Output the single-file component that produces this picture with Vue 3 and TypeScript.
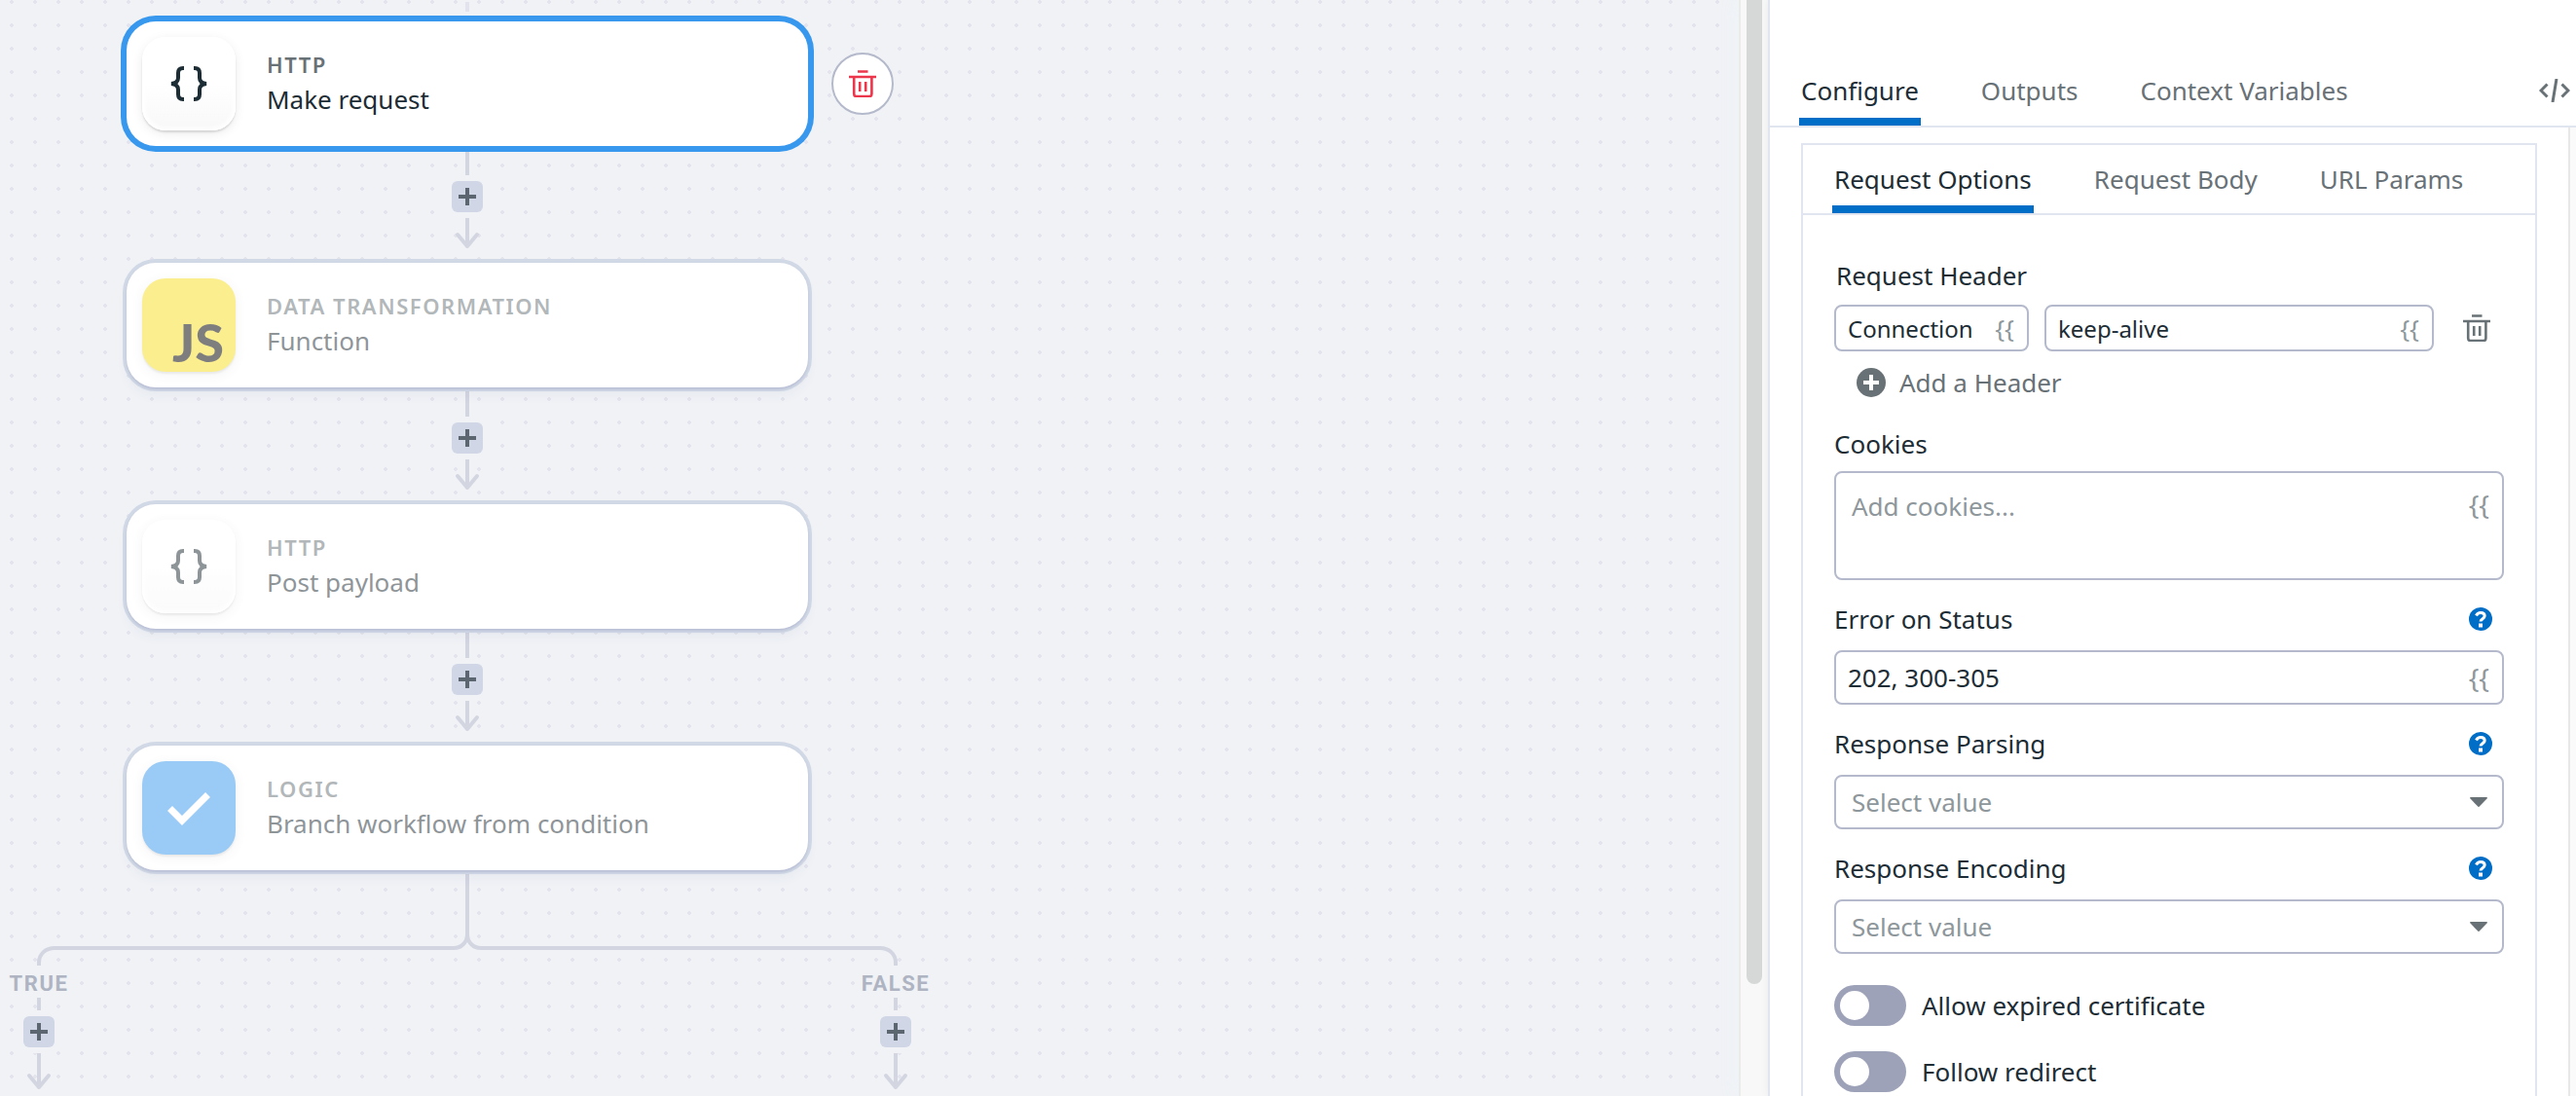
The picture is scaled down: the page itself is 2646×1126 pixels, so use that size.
<script setup lang="ts">
import { ref } from 'vue'

type Glyph = 'braces' | 'js' | 'check'

interface Step {
  id: number
  kind: string
  name: string
  glyph: Glyph
  selected: boolean
}

interface SelectField {
  id: string
  label: string
  options: string[]
}

const steps: Step[] = [
  { id: 1, kind: 'HTTP', name: 'Make request', glyph: 'braces', selected: true },
  { id: 2, kind: 'DATA TRANSFORMATION', name: 'Function', glyph: 'js', selected: false },
  { id: 3, kind: 'HTTP', name: 'Post payload', glyph: 'braces', selected: false },
  { id: 4, kind: 'LOGIC', name: 'Branch workflow from condition', glyph: 'check', selected: false },
]

const branches = ['TRUE', 'FALSE']
const mainTabs = ['Configure', 'Outputs', 'Context Variables']
const requestTabs = ['Request Options', 'Request Body', 'URL Params']

const selectFields: SelectField[] = [
  { id: 'parsing', label: 'Response Parsing', options: ['JSON', 'Text'] },
  { id: 'encoding', label: 'Response Encoding', options: ['UTF-8', 'Base64'] },
]

const toggles = ['Allow expired certificate', 'Follow redirect']

const activeMain = ref(mainTabs[0])
const activeRequest = ref(requestTabs[0])
const headerName = ref('Connection')
const headerValue = ref('keep-alive')
const cookies = ref('')
const errorStatus = ref('202, 300-305')
const selected = ref<Record<string, string>>({ parsing: '', encoding: '' })
</script>

<template>
  <div class="app">
    <main class="canvas">
      <div class="flow">
        <svg class="stub" viewBox="0 0 24 22" aria-hidden="true"><path d="M12 2v10" /></svg>
        <template v-for="(step, i) in steps" :key="step.id">
          <article class="card" :class="{ selected: step.selected }">
            <div class="tile" :class="step.glyph">
              <svg v-if="step.glyph === 'braces'" viewBox="0 0 40 40" aria-hidden="true">
                <path d="M15 4h-1c-3.500 0-5 1.800-5 5v5c0 3.500-2 5.500-7 6 5 .5 7 2.500 7 6v5c0 3.200 1.500 5 5 5h1M25 4h1c3.500 0 5 1.800 5 5v5c0 3.500 2 5.500 7 6-5 .5-7 2.500-7 6v5c0 3.200-1.500 5-5 5h-1" />
              </svg>
              <span v-else-if="step.glyph === 'js'" class="js-mark">JS</span>
              <svg v-else viewBox="0 0 44 36" aria-hidden="true">
                <path d="M2.500 18.500 15 31 41.500 4.500" />
              </svg>
            </div>
            <div class="caption">
              <span class="kind">{{ step.kind }}</span>
              <span class="name">{{ step.name }}</span>
            </div>
            <button v-if="step.selected" class="delete" type="button" aria-label="Delete step">
              <svg class="trash" viewBox="0 0 28 28" aria-hidden="true">
                <path d="M9 1.500h10.500M0 7h28" />
                <path d="M5.200 8v16.500a2.500 2.500 0 0 0 2.500 2.500h13.200a2.500 2.500 0 0 0 2.500-2.500V8M11.200 12v10M17.200 12v10" />
              </svg>
            </button>
          </article>
          <div v-if="i < steps.length - 1" class="connector">
            <svg class="lead" viewBox="0 0 24 30" aria-hidden="true"><path d="M12 0v30" /></svg>
            <button class="add" type="button" aria-label="Add step">
              <svg viewBox="0 0 18 18" aria-hidden="true"><path d="M9 0v18M0 9h18" /></svg>
            </button>
            <svg class="arrow" viewBox="0 0 24 34" aria-hidden="true">
              <path d="M12 0v29" /><path class="head" d="M2 17l10 12 10-12" />
            </svg>
          </div>
        </template>

        <svg class="fork" viewBox="0 0 960 98" aria-hidden="true">
          <path d="M480 0v66c0 8-6 14-14 14H56c-9 0-16 6-16 15v3" />
          <path d="M480 66c0 8 6 14 14 14h410c9 0 16 6 16 15v3" />
        </svg>
        <div class="arms">
          <div v-for="branch in branches" :key="branch" class="arm">
            <span class="branch">{{ branch }}</span>
            <svg class="tick" viewBox="0 0 24 13" aria-hidden="true"><path d="M12 0v13" /></svg>
            <button class="add" type="button" :aria-label="'Add step to ' + branch">
              <svg viewBox="0 0 18 18" aria-hidden="true"><path d="M9 0v18M0 9h18" /></svg>
            </button>
            <svg class="arrow" viewBox="0 0 24 34" aria-hidden="true">
              <path d="M12 0v34" /><path class="head" d="M2 23l10 12 10-12" />
            </svg>
          </div>
        </div>
      </div>
    </main>

    <div class="scrollbar" aria-hidden="true"><div class="thumb"></div></div>

    <aside class="panel">
      <nav class="tabs main-tabs">
        <button
          v-for="tab in mainTabs"
          :key="tab"
          type="button"
          class="tab"
          :class="{ active: tab === activeMain }"
          @click="activeMain = tab"
        >{{ tab }}</button>
        <button class="code" type="button" aria-label="View as code">
          <svg viewBox="0 0 32 24" aria-hidden="true">
            <path d="M8.500 5.500 2 12l6.500 6.500M23.500 5.500 30 12l-6.500 6.500M18 0l-4 24" />
          </svg>
        </button>
      </nav>

      <div class="panel-body">
        <section class="box">
          <nav class="tabs box-tabs">
            <button
              v-for="tab in requestTabs"
              :key="tab"
              type="button"
              class="tab"
              :class="{ active: tab === activeRequest }"
              @click="activeRequest = tab"
            >{{ tab }}</button>
          </nav>

          <form class="form" @submit.prevent>
            <div class="field">
              <label class="label first" for="header-name">Request Header</label>
              <div class="header-row">
                <div class="control small">
                  <input id="header-name" v-model="headerName" type="text" />
                  <button class="template" type="button" aria-label="Insert variable" v-text="'{{'"></button>
                </div>
                <div class="control small">
                  <input v-model="headerValue" type="text" aria-label="Header value" />
                  <button class="template" type="button" aria-label="Insert variable" v-text="'{{'"></button>
                </div>
                <button class="remove" type="button" aria-label="Remove header">
                  <svg class="trash" viewBox="0 0 28 28" aria-hidden="true">
                    <path d="M9 1.500h10.500M0 7h28" />
                    <path d="M5.200 8v16.500a2.500 2.500 0 0 0 2.500 2.500h13.200a2.500 2.500 0 0 0 2.500-2.500V8M11.200 12v10M17.200 12v10" />
                  </svg>
                </button>
              </div>
              <button class="add-header" type="button">
                <svg viewBox="0 0 30 30" aria-hidden="true">
                  <circle cx="15" cy="15" r="15" /><path d="M15 7v16M7 15h16" />
                </svg>
                Add a Header
              </button>
            </div>

            <div class="field cookies">
              <label class="label" for="cookies">Cookies</label>
              <div class="control area">
                <textarea id="cookies" v-model="cookies" placeholder="Add cookies..."></textarea>
                <button class="template" type="button" aria-label="Insert variable" v-text="'{{'"></button>
              </div>
            </div>

            <div class="field">
              <div class="label-row">
                <label class="label" for="error-status">Error on Status</label>
                <button class="help" type="button" aria-label="Help">
                  <svg viewBox="0 0 24 24" aria-hidden="true">
                    <circle cx="12" cy="12" r="12" />
                    <path d="M7.500 8.500C8.500 6.500 10 5.600 12 5.600c2.500 0 4.200 1.300 4.200 3.200 0 2.900-4.200 2.800-4.200 5.800" />
                    <path class="dot" d="M10 16.500h4v4h-4z" />
                  </svg>
                </button>
              </div>
              <div class="control">
                <input id="error-status" v-model="errorStatus" type="text" />
                <button class="template" type="button" aria-label="Insert variable" v-text="'{{'"></button>
              </div>
            </div>

            <div v-for="field in selectFields" :key="field.id" class="field">
              <div class="label-row">
                <label class="label" :for="field.id">{{ field.label }}</label>
                <button class="help" type="button" aria-label="Help">
                  <svg viewBox="0 0 24 24" aria-hidden="true">
                    <circle cx="12" cy="12" r="12" />
                    <path d="M7.500 8.500C8.500 6.500 10 5.600 12 5.600c2.500 0 4.200 1.300 4.200 3.200 0 2.900-4.200 2.800-4.200 5.800" />
                    <path class="dot" d="M10 16.500h4v4h-4z" />
                  </svg>
                </button>
              </div>
              <div class="control">
                <select :id="field.id" v-model="selected[field.id]">
                  <option value="" disabled hidden>Select value</option>
                  <option v-for="option in field.options" :key="option">{{ option }}</option>
                </select>
                <svg class="caret" viewBox="0 0 18 10" aria-hidden="true">
                  <path d="M1 0h16c1 0 1.300.9.500 1.600L9.800 9.600a1.100 1.100 0 0 1-1.600 0L.5 1.600C-.3.9 0 0 1 0z" />
                </svg>
              </div>
            </div>

            <div class="toggles">
              <label v-for="toggle in toggles" :key="toggle" class="toggle">
                <input type="checkbox" role="switch" />
                {{ toggle }}
              </label>
            </div>
          </form>
        </section>
        <div class="gutter" aria-hidden="true"></div>
      </div>
    </aside>
  </div>
</template>

<style>
body {
  margin: 0;
}
</style>

<style scoped>
.app {
  --ink: #1d2d35;
  --muted: #687176;
  --faint: #8e979b;
  --canvas: #f0f2f6;
  --line: #d3d5e1;
  --edge: #e1e5ef;
  --control: #b4b9cb;
  --blue: #006dc7;
  display: flex;
  height: 100vh;
  overflow: hidden;
  background: #fff;
  color: var(--ink);
  font-family: "Noto Sans", "Open Sans", sans-serif;
  font-size: 26px;
  line-height: 36px;
}

.app *,
.app *::before {
  box-sizing: border-box;
}

button,
input,
textarea,
select {
  margin: 0;
  padding: 0;
  border: 0;
  background: none;
  color: inherit;
  font: inherit;
}

button {
  flex: none;
  cursor: pointer;
}

svg {
  display: block;
  flex: none;
  fill: none;
  stroke: currentColor;
}

/* Canvas */
.canvas {
  flex: 1;
  min-width: 0;
  overflow: hidden;
  background: radial-gradient(circle, #e3e4ed 2px, transparent 2px) 0 14px / 24px 24px var(--canvas);
}

.flow {
  display: flex;
  flex-direction: column;
  align-items: center;
  width: 960px;
}

.stub {
  width: 24px;
  height: 22px;
  color: #e2e3ec;
  stroke-width: 4;
}

.card {
  position: relative;
  z-index: 1;
  display: flex;
  align-items: center;
  gap: 32px;
  width: 700px;
  height: 128px;
  padding: 16px;
  border-radius: 30px;
  background: #fff;
  box-shadow: 0 2px 3px rgba(140, 140, 180, 0.35), 0 0 0 4px #d1d9e6, 0 8px 12px rgba(60, 80, 120, 0.05);
}

.card.selected {
  box-shadow: 0 0 0 6px #3798ee;
}

.tile {
  display: flex;
  align-items: center;
  justify-content: center;
  flex: none;
  width: 96px;
  height: 96px;
  border-radius: 24px;
  box-shadow: 0 2px 2px rgba(0, 0, 0, 0.12), 0 3px 12px rgba(0, 0, 0, 0.08);
}

.tile.braces {
  background: linear-gradient(#fff 50%, #f8f8f8);
  box-shadow: 0 2px 2px rgba(0, 0, 0, 0.12), 0 3px 12px rgba(0, 0, 0, 0.08), inset 0 0 4px 3px #fff;
}

.tile.js {
  align-items: flex-end;
  justify-content: flex-end;
  padding: 0 12px 4px 0;
  background: #f8df22;
  color: #000;
}

.tile.check {
  background: #3798ee;
  color: #fff;
}

.card:not(.selected) .tile,
.card:not(.selected) .caption {
  opacity: 0.5;
}

.braces svg {
  width: 40px;
  height: 40px;
  stroke-width: 4;
}

.check svg {
  width: 44px;
  height: 36px;
  stroke-width: 7;
}

.js-mark {
  font-family: Lato, sans-serif;
  font-size: 54px;
  font-weight: 900;
  line-height: 52px;
}

.caption {
  display: flex;
  flex-direction: column;
  gap: 4px;
}

.kind {
  color: var(--muted);
  font-size: 22px;
  font-weight: 600;
  line-height: 28px;
  letter-spacing: 0.07em;
}

.delete {
  position: absolute;
  top: 32px;
  left: 724px;
  display: flex;
  align-items: center;
  justify-content: center;
  width: 64px;
  height: 64px;
  border: 2px solid var(--control);
  border-radius: 50%;
  background: #fff;
  color: #eb364b;
}

.trash {
  width: 28px;
  height: 28px;
  stroke-width: 2.6;
}

.connector,
.arm {
  display: flex;
  flex-direction: column;
  align-items: center;
  color: var(--line);
  stroke-width: 4;
}

.connector {
  height: 120px;
}

.lead {
  width: 24px;
  height: 30px;
}

.tick {
  width: 24px;
  height: 13px;
}

.arrow {
  width: 24px;
  height: 34px;
  overflow: visible;
}

.head {
  stroke-linecap: round;
  stroke-linejoin: round;
}

.add {
  display: flex;
  align-items: center;
  justify-content: center;
  width: 32px;
  height: 32px;
  margin: 6px 0;
  border-radius: 6px;
  background: #d0d6e6;
  box-shadow: 0 0 0 6px var(--canvas);
  color: #5b6670;
}

.add svg {
  width: 18px;
  height: 18px;
}

.fork {
  width: 960px;
  height: 98px;
  color: var(--line);
  stroke-width: 4;
}

.arms {
  display: flex;
  justify-content: space-between;
  width: 960px;
}

.arm {
  width: 80px;
}

.branch {
  padding-top: 4px;
  background: var(--canvas);
  color: #afb4c2;
  font-family: Roboto, sans-serif;
  font-size: 22px;
  font-weight: 700;
  line-height: 29px;
  letter-spacing: 0.07em;
}

/* Canvas scrollbar */
.scrollbar {
  position: relative;
  flex: none;
  width: 30px;
  padding: 0 6px;
  border-left: 2px solid #eaecec;
  background: #f8f8f8;
  box-shadow: 0 0 20px rgba(240, 246, 248, 0.9);
}

.thumb {
  width: 16px;
  height: 1011px;
  border-radius: 0 0 8px 8px;
  background: #d6d7d7;
}

/* Panel */
.panel {
  position: relative;
  display: flex;
  flex-direction: column;
  flex: none;
  width: 830px;
  border-left: 2px solid var(--edge);
  background: #fff;
  box-shadow: 0 0 8px rgba(60, 80, 100, 0.08);
}

.tabs {
  display: flex;
  align-items: flex-end;
  flex: none;
  gap: 60px;
  padding-left: 30px;
  border-bottom: 2px solid var(--edge);
}

.main-tabs {
  height: 131px;
}

.box-tabs {
  height: 72px;
}

.tab {
  padding: 0 2px 9px;
  border-bottom: 8px solid transparent;
  color: var(--muted);
}

.main-tabs .tab {
  padding-bottom: 10px;
}

.tab.active {
  border-bottom-color: var(--blue);
  color: var(--ink);
}

.code {
  margin: 0 6px 24px auto;
  color: var(--muted);
}

.code svg {
  width: 32px;
  height: 24px;
  stroke-width: 3;
}

.panel-body {
  display: flex;
  flex: 1;
  min-height: 0;
}

.box {
  flex: 1;
  min-width: 0;
  margin: 16px 32px 0;
  border: 2px solid var(--edge);
  border-bottom: 0;
}

.gutter {
  flex: none;
  width: 8px;
  border-left: 2px solid #e8e8e8;
  background: #fafafa;
}

.form {
  display: flex;
  flex-direction: column;
  gap: 22px;
  padding: 44px 32px;
}

.field {
  display: flex;
  flex-direction: column;
}

.cookies {
  margin-top: 5px;
}

.label {
  margin-bottom: 14px;
}

.label.first {
  margin: 0 2px 12px;
}

.cookies .label {
  margin-bottom: 10px;
}

.label-row {
  display: flex;
  justify-content: space-between;
  padding-right: 12px;
}

.help {
  height: 36px;
  color: #fff;
}

.help svg {
  width: 24px;
  height: 24px;
  stroke-width: 3;
}

.help circle {
  fill: var(--blue);
  stroke: none;
}

.dot {
  fill: #fff;
  stroke: none;
}

.header-row {
  display: grid;
  grid-template-columns: 1fr 2fr auto;
  align-items: center;
  gap: 16px;
}

.control {
  position: relative;
  display: flex;
  align-items: center;
  height: 56px;
  border: 2px solid var(--control);
  border-radius: 8px;
}

.control input,
.control textarea,
.control select {
  flex: 1;
  width: 0;
  min-width: 0;
  height: 100%;
  padding: 0 12px;
  outline: 0;
}

.control.small {
  height: 48px;
  font-size: 24px;
}

.control.area {
  align-items: flex-start;
  height: 112px;
}

.control textarea {
  padding: 16px;
  resize: none;
}

.control select {
  padding: 0 16px;
  appearance: none;
  color: var(--faint);
}

textarea::placeholder {
  color: var(--faint);
  opacity: 1;
}

.template {
  margin-right: 13px;
  color: var(--faint);
  font-size: 28px;
  line-height: 32px;
}

.small .template {
  font-size: 26px;
}

.area .template {
  margin-top: 16px;
}

.caret {
  position: absolute;
  right: 15px;
  width: 18px;
  height: 10px;
  fill: var(--muted);
  stroke: none;
  pointer-events: none;
}

.remove {
  margin: 0 14px;
  color: var(--muted);
}

.add-header {
  display: flex;
  align-items: center;
  align-self: flex-start;
  gap: 14px;
  margin: 14px 0 0 23px;
  color: var(--muted);
}

.add-header svg {
  width: 30px;
  height: 30px;
  fill: currentColor;
  stroke: #fff;
  stroke-width: 4;
}

.add-header circle {
  stroke: none;
}

.toggles {
  display: flex;
  flex-direction: column;
  gap: 26px;
  margin-top: 10px;
}

.toggle {
  display: flex;
  align-items: center;
  gap: 16px;
  height: 42px;
}

.toggle input {
  flex: none;
  width: 74px;
  height: 42px;
  padding: 6px;
  border-radius: 21px;
  appearance: none;
  background: #9da2b9;
}

.toggle input::before {
  display: block;
  width: 30px;
  height: 30px;
  border-radius: 50%;
  background: #fff;
  content: "";
}

.toggle input:checked {
  background: var(--blue);
}

.toggle input:checked::before {
  margin-left: auto;
}
</style>
